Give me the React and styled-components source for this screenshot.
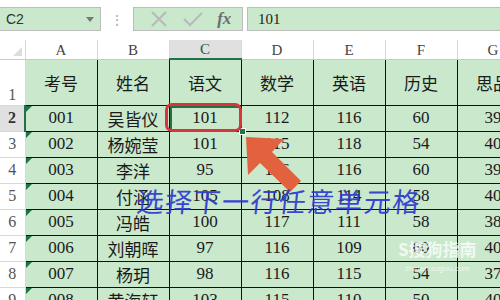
import styled, { createGlobalStyle } from 'styled-components';

const GlobalStyle = createGlobalStyle`
  html, body {
    margin: 0;
    padding: 0;
    background: #ffffff;
    overflow: hidden;
  }
`;

const GREEN = '#c9e8cc';

const Stage = styled.div`
  position: relative;
  width: 500px;
  height: 300px;
  overflow: hidden;
  font-family: "Noto Sans CJK SC", "Liberation Sans", sans-serif;
`;

const FormulaBar = styled.div`
  display: flex;
  align-items: stretch;
  height: 24px;
  margin-top: 7px;
  margin-bottom: 9px;
`;

const NameBox = styled.div`
  width: 101px;
  display: flex;
  align-items: center;
  justify-content: space-between;
  padding: 0 6px;
  box-sizing: border-box;
  background: ${GREEN};
  border: 1px solid #bdbdbd;
  border-left: none;
  font-family: "Liberation Sans", sans-serif;
  font-size: 14px;
  color: #333;
`;

const Caret = styled.span`
  width: 0;
  height: 0;
  border-left: 4px solid transparent;
  border-right: 4px solid transparent;
  border-top: 5px solid #777;
`;

const Dots = styled.div`
  width: 32px;
  display: flex;
  justify-content: center;
  align-items: center;
  color: #aaa;
  font-size: 14px;
`;

const FxGroup = styled.div`
  width: 110px;
  display: flex;
  align-items: center;
  justify-content: space-around;
  padding: 0 4px 0 8px;
  box-sizing: border-box;
  background: ${GREEN};
  border: 1px solid #bdbdbd;
`;

const Fx = styled.span`
  font-family: "Liberation Serif", serif;
  font-style: italic;
  font-weight: bold;
  font-size: 17px;
  color: #6e6e6e;
`;

const FormulaInput = styled.div`
  flex: 1;
  margin-left: 4px;
  display: flex;
  align-items: center;
  padding-left: 10px;
  background: ${GREEN};
  border: 1px solid #bdbdbd;
  border-right: none;
  font-family: "Liberation Serif", serif;
  font-size: 15px;
  color: #222;
`;

const Sheet = styled.table`
  border-collapse: collapse;
  table-layout: fixed;
  width: 529px;
`;

const Col = styled.col`
  width: ${p => p.$w}px;
`;

const Corner = styled.th`
  height: 18px;
  padding: 0;
  background: #fff;
  border-right: 1px solid #d8d8d8;
  border-bottom: 1px solid #c8c8c8;
  position: relative;
  &::after {
    content: '';
    position: absolute;
    right: 3px;
    bottom: 3px;
    border-left: 9px solid transparent;
    border-bottom: 9px solid #dcdcdc;
  }
`;

const ColHead = styled.th`
  padding: 0;
  height: 18px;
  background: ${p => (p.$active ? '#e0e0e0' : '#fff')};
  border-right: 1px solid #d8d8d8;
  border-bottom: ${p => (p.$active ? '2px solid #217346' : '1px solid #c8c8c8')};
  font-family: "Liberation Serif", serif;
  font-weight: normal;
  font-size: 15px;
  color: ${p => (p.$active ? '#1d5b3a' : '#444')};
  vertical-align: bottom;
  line-height: 18px;
`;

const RowHead = styled.td`
  padding: 0 0 1px 0;
  text-align: center;
  vertical-align: ${p => (p.$tall ? 'bottom' : 'middle')};
  background: ${p => (p.$active ? '#e0e0e0' : '#fff')};
  border-bottom: 1px solid #d8d8d8;
  border-right: ${p => (p.$active ? '2px solid #217346' : '1px solid #d8d8d8')};
  font-family: "Liberation Serif", serif;
  font-size: 16px;
  font-weight: ${p => (p.$active ? 'bold' : 'normal')};
  color: ${p => (p.$active ? '#333' : '#555')};
`;

const Row = styled.tr`
  height: ${p => p.$h}px;
`;

const Cell = styled.td`
  position: relative;
  padding: 0;
  text-align: center;
  vertical-align: middle;
  background: ${GREEN};
  border: 1px solid #111;
  border-left: ${p => (p.$first ? 'none' : '1px solid #111')};
  font-family: ${p => (p.$cjk
    ? '"Noto Sans CJK SC", sans-serif'
    : '"Liberation Serif", serif')};
  font-size: 17px;
  color: #1a1a1a;
  white-space: nowrap;
  overflow: hidden;
  box-shadow: ${p => (p.$selected ? 'inset 0 0 0 2px #217346' : 'none')};
  &::before {
    content: '';
    display: ${p => (p.$flag ? 'block' : 'none')};
    position: absolute;
    left: 0;
    top: 0;
    border-top: 6px solid #1f7244;
    border-right: 6px solid transparent;
  }
`;

const RedBox = styled.div`
  position: absolute;
  left: 165px;
  top: 103px;
  width: 77px;
  height: 29px;
  box-sizing: border-box;
  border: 3px solid #d9343d;
  border-radius: 7px;
`;

const FillHandle = styled.div`
  position: absolute;
  left: 239px;
  top: 128px;
  width: 5px;
  height: 5px;
  background: #217346;
  border: 1px solid #fff;
`;

const Arrow = styled.svg`
  position: absolute;
  left: 0;
  top: 0;
`;

const Note = styled.div`
  position: absolute;
  left: 137px;
  top: 181px;
  font-family: "Noto Sans CJK SC", sans-serif;
  font-size: 27px;
  letter-spacing: 1.4px;
  color: #2d3ad0;
  transform: skewX(-6deg);
  opacity: 0.92;
`;

const Watermark = styled.div`
  position: absolute;
  left: 398px;
  top: 240px;
  display: flex;
  flex-direction: column;
  align-items: center;
  gap: 8px;
  color: rgba(255, 255, 255, 0.75);
  font-family: "Noto Sans CJK SC", sans-serif;
  line-height: 1;
`;

const MarkTitle = styled.span`
  font-size: 17px;
  font-weight: bold;
`;

const MarkUrl = styled.span`
  font-family: "Liberation Sans", sans-serif;
  font-size: 8px;
  color: rgba(255, 255, 255, 0.7);
`;

const columns = ['A', 'B', 'C', 'D', 'E', 'F', 'G'];

const rows = [
  ['考号', '姓名', '语文', '数学', '英语', '历史', '思品'],
  ['001', '吴皆仪', '101', '112', '116', '60', '39'],
  ['002', '杨婉莹', '101', '115', '118', '54', '40'],
  ['003', '李洋', '95', '116', '116', '60', '39'],
  ['004', '付涵', '105', '108', '114', '58', '40'],
  ['005', '冯皓', '100', '117', '111', '58', '38'],
  ['006', '刘朝晖', '97', '116', '109', '60', '40'],
  ['007', '杨玥', '98', '116', '115', '54', '37'],
  ['008', '黄海轩', '103', '115', '110', '50', '40'],
];

const isCjk = s => /[\u4e00-\u9fff]/.test(s);

export default function App() {
  return (
    <Stage>
      <GlobalStyle />
      <FormulaBar>
        <NameBox>
          C2
          <Caret />
        </NameBox>
        <Dots>⋮</Dots>
        <FxGroup>
          <svg width="20" height="18" viewBox="0 0 20 18">
            <path d="M3 2 L17 16 M17 2 L3 16" stroke="#b9b9b9" strokeWidth="2" fill="none" />
          </svg>
          <svg width="22" height="18" viewBox="0 0 22 18">
            <path d="M2 9 L8 15 L20 3" stroke="#b9b9b9" strokeWidth="2" fill="none" />
          </svg>
          <Fx>fx</Fx>
        </FxGroup>
        <FormulaInput>101</FormulaInput>
      </FormulaBar>

      <Sheet>
        <colgroup>
          <Col $w={25} />
          {columns.map(c => <Col key={c} $w={72} />)}
        </colgroup>
        <thead>
          <tr>
            <Corner />
            {columns.map(c => (
              <ColHead key={c} $active={c === 'C'}>{c}</ColHead>
            ))}
          </tr>
        </thead>
        <tbody>
          {rows.map((r, i) => (
            <Row key={i} $h={i === 0 ? 46 : 25}>
              <RowHead $tall={i === 0} $active={i === 1}>{i + 1}</RowHead>
              {r.map((v, j) => (
                <Cell
                  key={j}
                  $first={j === 0}
                  $cjk={isCjk(v)}
                  $flag={j === 0 && i > 0}
                  $selected={i === 1 && j === 2}
                >
                  {v}
                </Cell>
              ))}
            </Row>
          ))}
        </tbody>
      </Sheet>

      <FillHandle />
      <RedBox />
      <Arrow width="500" height="300" viewBox="0 0 500 300">
        <polygon
          points="246,137 284,139 272,152 301,181 290,192 260,163 248,175"
          fill="#e2613f"
        />
      </Arrow>
      <Note>选择下一行任意单元格</Note>
      <Watermark>
        <MarkTitle>S搜狗指南</MarkTitle>
        <MarkUrl>zhinan.sogou.com</MarkUrl>
      </Watermark>
    </Stage>
  );
}
